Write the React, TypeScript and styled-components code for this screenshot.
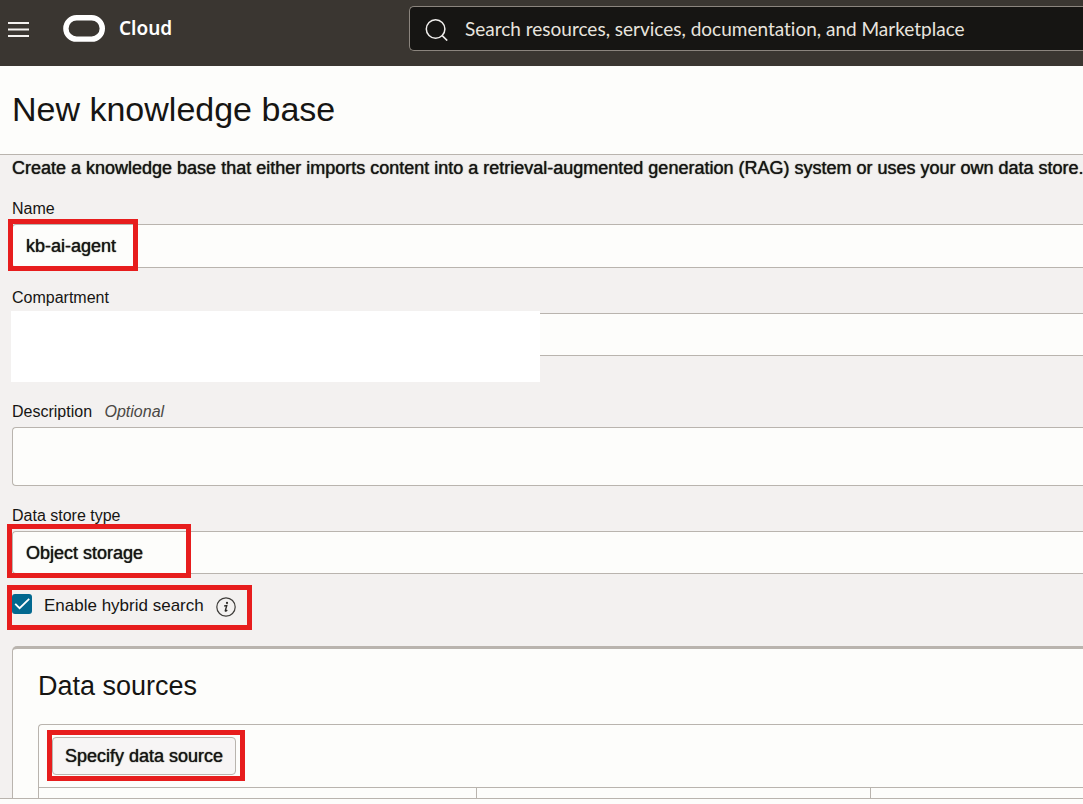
import React from "react";
import styled, { createGlobalStyle, css } from "styled-components";

const color = {
  chrome: "#3a3631",
  ink: "#161513",
  surface: "#fdfdfb",
  page: "#f3f1f0",
  line: "#b9b4ae",
  mark: "#e71d1d",
  teal: "#02688f",
};

const GlobalStyle = createGlobalStyle`
  *, *::before, *::after { box-sizing: border-box; }
  body {
    margin: 0;
    background: ${color.page};
    color: ${color.ink};
    font-family: "Liberation Sans", Arial, sans-serif;
    font-size: 16px;
    line-height: 20px;
  }
`;

const strongText = css`
  font-family: "Liberation Sans", Arial, sans-serif;
  font-size: 18px;
  font-weight: 400;
  color: ${color.ink};
  text-shadow: 0 0 1px ${color.ink};
`;

const Page = styled.div`
  display: flex;
  flex-direction: column;
  height: 100vh;
  overflow: hidden;
`;

const TopBar = styled.header`
  display: flex;
  align-items: flex-start;
  flex: none;
  padding: 6px 0 15px 8px;
  background: ${color.chrome};
`;

const MenuButton = styled.button`
  display: flex;
  width: 21px;
  height: 45px;
  padding: 2px 0 0;
  align-items: center;
  border: 0;
  background: none;
`;

const Brand = styled.a`
  display: flex;
  align-items: center;
  gap: 14px;
  width: 346px;
  height: 44px;
  margin-left: 34px;
  color: #fff;
  font-family: "Noto Sans", sans-serif;
  font-size: 19px;
  font-weight: 600;
  text-decoration: none;
`;

const SearchBox = styled.label`
  display: flex;
  flex: 1;
  align-items: center;
  gap: 16px;
  height: 45px;
  padding-left: 15px;
  border: 1px solid #8b857e;
  border-right: 0;
  border-radius: 5px 0 0 5px;
  background: ${color.ink};
`;

const SearchInput = styled.input`
  flex: 1;
  min-width: 0;
  height: 40px;
  padding: 0;
  border: 0;
  outline: 0;
  background: transparent;
  font-family: Lato, "Noto Sans", sans-serif;
  font-size: 19px;
  font-variant-ligatures: none;
  &::placeholder { color: #e8e4df; opacity: 1; }
`;

const TitleBar = styled.div`
  flex: none;
  padding: 23px 12px 25px;
  border-bottom: 1px solid ${color.line};
  background: ${color.surface};
`;

const Title = styled.h1`
  margin: 0;
  font-size: 34px;
  font-weight: 400;
  line-height: 40px;
`;

const Main = styled.main`
  flex: 1;
  min-height: 0;
  overflow: hidden;
  padding-left: 12px;
`;

const Intro = styled.p`
  ${strongText}
  margin: 3px 0 21px;
  white-space: nowrap;
`;

const Field = styled.div<{ $gap: number }>`
  display: flex;
  flex-direction: column;
  gap: 5px;
  margin-bottom: ${(p) => p.$gap}px;
`;

const Label = styled.label`
  display: block;
`;

const Optional = styled.em`
  margin-left: 8px;
  color: #4a4845;
`;

const Control = styled.div`
  position: relative;
  display: flex;
`;

const controlStyle = css`
  ${strongText}
  display: block;
  width: 100%;
  margin: 0;
  padding: 0 13px;
  border: 1px solid ${color.line};
  border-right: 0;
  border-radius: 4px 0 0 4px;
  outline: 0;
  background: ${color.surface};
`;

const TextInput = styled.input`
  ${controlStyle}
  height: 44px;
`;

const Select = styled.select`
  ${controlStyle}
  height: 43px;
  appearance: none;
`;

const TextArea = styled.textarea`
  ${controlStyle}
  height: 59px;
  resize: none;
`;

const Redaction = styled.div`
  position: absolute;
  top: -2px;
  left: -1px;
  width: 529px;
  height: 71px;
  background: #fff;
`;

const Highlight = styled.div<{ $top: number; $left: number; $width: number; $height: number }>`
  position: absolute;
  top: ${(p) => p.$top}px;
  left: ${(p) => p.$left}px;
  width: ${(p) => p.$width}px;
  height: ${(p) => p.$height}px;
  border: 5px solid ${color.mark};
  pointer-events: none;
`;

const CheckRow = styled.div`
  position: relative;
  display: flex;
  align-items: center;
  height: 24px;
  margin-bottom: 28px;
  font-size: 17px;
`;

const CheckBox = styled.input`
  width: 20px;
  height: 20px;
  margin: 0 12px 4px 0;
  appearance: none;
  border-radius: 3px;
  background: ${color.teal};
`;

const CheckMark = styled.svg`
  position: absolute;
  top: 0;
  left: 0;
  pointer-events: none;
`;

const InfoButton = styled.button`
  display: flex;
  margin-left: 12px;
  padding: 2px 0 0;
  border: 0;
  background: none;
`;

const Panel = styled.section`
  padding: 21px 0 0 25px;
  border: 1px solid ${color.line};
  border-top-width: 3px;
  border-right: 0;
  border-radius: 5px 0 0 0;
  background: ${color.surface};
`;

const PanelTitle = styled.h2`
  margin: 0 0 22px;
  font-size: 27px;
  font-weight: 400;
  line-height: 32px;
`;

const Sources = styled.div`
  border: 1px solid ${color.line};
  border-right: 0;
  border-radius: 4px 0 0 0;
`;

const Toolbar = styled.div`
  display: flex;
  padding: 12px 13px;
`;

const ActionButton = styled.button`
  ${strongText}
  height: 38px;
  padding: 0 12px;
  border: 1px solid ${color.line};
  border-radius: 4px;
  background: #f7f5f5;
  white-space: nowrap;
`;

const SourceTable = styled.table`
  width: 100%;
  border-collapse: collapse;
  table-layout: fixed;
  border-top: 1px solid ${color.line};
`;

const Cell = styled.td<{ $width?: number }>`
  width: ${(p) => (p.$width ? `${p.$width}px` : "auto")};
  height: 48px;
  & + & { border-left: 1px solid ${color.line}; }
`;

const Footer = styled.footer`
  flex: none;
  height: 6px;
  border-top: 1px solid ${color.line};
  background: ${color.surface};
`;

export default function App() {
  return (
    <Page>
      <GlobalStyle />
      <TopBar>
        <MenuButton aria-label="Navigation menu">
          <svg width="21" height="15" fill="#f4f2f0">
            <path d="M0 0h21v2H0zM0 6.5h21v2H0zM0 13h21v2H0z" />
          </svg>
        </MenuButton>
        <Brand href="#">
          <svg width="42" height="27" fill="none" stroke="#fff" strokeWidth="5.4">
            <rect x="2.9" y="2.7" width="36.4" height="21.4" rx="10.7" />
          </svg>
          Cloud
        </Brand>
        <SearchBox>
          <svg width="24" height="24" fill="none" stroke="#f1efed" strokeWidth="1.5">
            <circle cx="10.6" cy="12" r="9.3" />
            <path d="M17.2 18.6l5 5" />
          </svg>
          <SearchInput
            aria-label="Search"
            placeholder="Search resources, services, documentation, and Marketplace"
          />
        </SearchBox>
      </TopBar>
      <TitleBar>
        <Title>New knowledge base</Title>
      </TitleBar>
      <Main>
        <Intro>
          Create a knowledge base that either imports content into a retrieval-augmented
          generation (RAG) system or uses your own data store.
        </Intro>
        <Field $gap={20}>
          <Label htmlFor="name">Name</Label>
          <Control>
            <TextInput id="name" defaultValue="kb-ai-agent" />
            <Highlight $top={-5} $left={-4} $width={130} $height={52} />
          </Control>
        </Field>
        <Field $gap={46}>
          <Label htmlFor="compartment">Compartment</Label>
          <Control>
            <Select id="compartment" />
            <Redaction />
          </Control>
        </Field>
        <Field $gap={20}>
          <Label htmlFor="description">
            Description <Optional>Optional</Optional>
          </Label>
          <Control>
            <TextArea id="description" />
          </Control>
        </Field>
        <Field $gap={20}>
          <Label htmlFor="store">Data store type</Label>
          <Control>
            <Select id="store">
              <option>Object storage</option>
            </Select>
            <Highlight $top={-7} $left={-5} $width={184} $height={54} />
          </Control>
        </Field>
        <CheckRow>
          <CheckBox id="hybrid" type="checkbox" defaultChecked />
          <CheckMark width="20" height="20" fill="none" stroke="#fff" strokeWidth="1.8">
            <path d="M3.2 9.8l4.4 4.4 9.6-9.4" />
          </CheckMark>
          <Label htmlFor="hybrid">Enable hybrid search</Label>
          <InfoButton aria-label="About hybrid search">
            <svg width="20" height="20">
              <circle cx="10" cy="10" r="9.2" fill="none" stroke="#3f3d3a" strokeWidth="1.2" />
              <circle cx="11" cy="5.9" r="1.1" fill="#2b2926" />
              <path
                d="M8.2 9l2.6-.5-1.5 5q-.2.9.5.6l1.5-1"
                fill="none"
                stroke="#2b2926"
                strokeWidth="1.3"
              />
            </svg>
          </InfoButton>
          <Highlight $top={-9} $left={-5} $width={245} $height={45} />
        </CheckRow>
        <Panel>
          <PanelTitle>Data sources</PanelTitle>
          <Sources>
            <Toolbar>
              <Control>
                <ActionButton>Specify data source</ActionButton>
                <Highlight $top={-7} $left={-5} $width={198} $height={51} />
              </Control>
            </Toolbar>
            <SourceTable>
              <tbody>
                <tr>
                  <Cell $width={437} />
                  <Cell $width={394} />
                  <Cell />
                </tr>
              </tbody>
            </SourceTable>
          </Sources>
        </Panel>
      </Main>
      <Footer />
    </Page>
  );
}
